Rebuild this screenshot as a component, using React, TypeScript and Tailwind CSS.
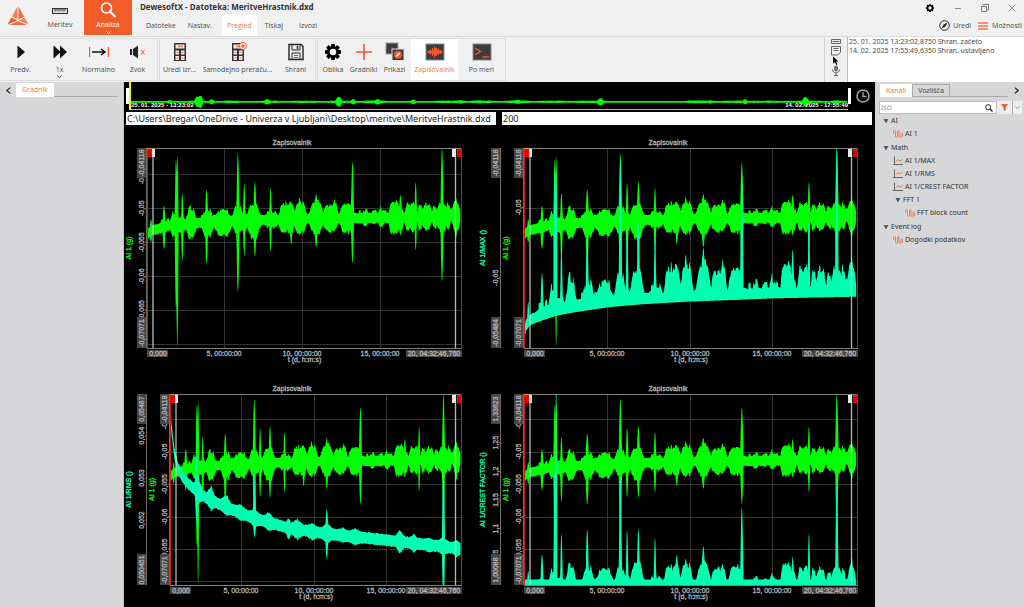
import type { ReactNode } from 'react';

type Point = [number, number];
type Band = { x: number; top: number; bottom: number };

const SPAN = 946;
const RANGE = 600;

// [position, half width, upper edge, lower edge]
const spikes = [
  [12, 4, 213, 283],
  [51, 5, 173, 303],
  [87, 4, 33, 480],
  [91, 4, 24, 601],
  [106, 4, 134, 341],
  [179, 5, 125, 348],
  [273, 5, 15, 434],
  [292, 4, 105, 325],
  [324, 5, 101, 326],
  [371, 4, 120, 311],
  [433, 5, 161, 290],
  [458, 6, 148, 262],
  [508, 6, 138, 298],
  [563, 5, 154, 250],
  [617, 5, 42, 346],
  [702, 4, 173, 238],
  [761, 5, 141, 263],
  [807, 4, 102, 308],
  [886, 5, 0, 401],
  [928, 5, 150, 270],
];

const bursts = [
  [84, 20, 188, 268],
  [102, 24, 205, 255],
  [133, 20, 172, 275],
  [182, 24, 180, 270],
  [229, 36, 182, 270],
  [273, 24, 173, 258],
  [292, 16, 190, 250],
  [320, 28, 166, 274],
  [374, 30, 186, 244],
  [411, 20, 158, 264],
  [430, 20, 158, 260],
  [460, 26, 156, 262],
  [509, 28, 152, 264],
  [545, 22, 164, 256],
  [563, 16, 160, 252],
  [594, 22, 162, 258],
  [606, 16, 162, 260],
  [656, 14, 182, 236],
  [680, 12, 184, 232],
  [705, 16, 180, 238],
  [738, 16, 154, 262],
  [750, 14, 154, 262],
  [764, 12, 176, 250],
  [785, 16, 162, 250],
  [797, 12, 156, 254],
  [820, 10, 164, 250],
  [840, 22, 162, 250],
  [864, 12, 170, 244],
  [886, 24, 162, 252],
  [905, 10, 160, 250],
  [928, 18, 158, 254],
];

const greenCenter: Point[] = [
  [0, 262], [8, 252], [20, 246], [70, 233], [120, 228], [220, 222],
  [320, 217], [420, 215], [520, 212], [720, 210], [946, 205],
];

const maxFloor: Point[] = [
  [0, 580], [6, 548], [17, 532], [50, 518], [92, 503], [143, 493], [237, 478],
  [332, 469], [464, 461], [616, 455], [710, 451], [946, 446],
];

const rmsCenter: Point[] = [
  [0, 60], [6, 120], [14, 185], [26, 232], [40, 260], [60, 282], [90, 307],
  [121, 328], [164, 348], [218, 370], [272, 390], [326, 405], [380, 420],
  [434, 428], [488, 436], [595, 449], [703, 459], [811, 471], [941, 486],
];

const rmsBursts = [
  [86, 5, 95, 80],
  [92, 16, 34, 24],
  [133, 14, 34, 20],
  [182, 18, 32, 14],
  [228, 20, 14, 10],
  [274, 5, 120, 42],
  [274, 20, 14, 12],
  [320, 18, 18, 12],
  [384, 8, 12, 18],
  [412, 20, 18, 20],
  [460, 18, 12, 14],
  [508, 5, 60, 62],
  [509, 20, 18, 16],
  [560, 20, 10, 6],
  [600, 20, 14, 12],
  [745, 16, 22, 24],
  [790, 14, 14, 14],
  [840, 16, 8, 10],
  [886, 5, 250, 160],
  [886, 20, 16, 12],
  [928, 16, 10, 12],
];

const interpolate = (points: Point[], x: number) => {
  const next = points.findIndex((p) => p[0] >= x);
  if (next === -1) return points[points.length - 1][1];
  if (next === 0) return points[0][1];
  const [x0, y0] = points[next - 1];
  const [x1, y1] = points[next];
  return y0 + ((y1 - y0) * (x - x0)) / (x1 - x0);
};

const noise = (n: number) => {
  const s = Math.sin(n * 12.9898) * 43758.5453;
  return s - Math.floor(s);
};

const spikeShape = (d: number, width: number) => Math.max(0, 1 - (d / width) ** 2);
const burstShape = (d: number, width: number) => Math.min(1, Math.max(0, 1 - d / width) * 1.5);

const signal: Band[] = [];
for (let x = 0; x <= 941; x++) {
  const center = interpolate(greenCenter, x);
  const cell = Math.floor(x / 4);
  let up = 14 + noise(cell) * 3 + (noise(Math.floor(x / 6) + 3) > 0.88 ? 8 : 0);
  let down = 13 + noise(cell + 500) * 3;
  bursts.forEach(([bx, width, top, bottom]) => {
    const shape = burstShape(Math.abs(x - bx), width);
    up = Math.max(up, (center - top) * shape * (0.72 + 0.28 * noise(cell + 90)));
    down = Math.max(down, (bottom - center) * shape * (0.72 + 0.28 * noise(cell + 290)));
  });
  spikes.forEach(([sx, width, top, bottom]) => {
    const k = spikeShape(x - sx, width);
    up = Math.max(up, (center - top) * k);
    down = Math.max(down, (bottom - center) * k);
  });
  signal.push({ x, top: center - up, bottom: center + down });
}

const maxSignal: Band[] = signal.map(({ x, top }) => {
  const floor = interpolate(maxFloor, x);
  return { x, top: Math.min(top * 2.16, floor - 18), bottom: floor };
});

const crestSignal: Band[] = signal.map(({ x, top, bottom }) => ({
  x,
  top: Math.min(583, 583 - (bottom - top - 38) * 0.86) - (bottom - top > 500 ? 300 : 0),
  bottom: RANGE,
}));

const rmsSignal: Band[] = signal.map(({ x }) => {
  const center = interpolate(rmsCenter, x);
  const cell = Math.floor(x / 3);
  let up = 16 + noise(cell + 40) * 4;
  let down = 16 + noise(cell + 70) * 4;
  rmsBursts.forEach(([bx, width, high, low]) => {
    const d = Math.abs(x - bx);
    const k = width < 9 ? spikeShape(d, width) : Math.max(0, 1 - d / width) * (0.6 + 0.4 * noise(cell));
    up = Math.max(up, 17 + high * k);
    down = Math.max(down, 17 + low * k);
  });
  return { x, top: center - up, bottom: center + down };
});

const bandPath = (band: Band[], left: number, top: number, width: number, height: number) => {
  const px = (x: number) => (left + (x / SPAN) * width).toFixed(1);
  const py = (y: number) =>
    (top + (Math.min(RANGE, Math.max(0, y)) / RANGE) * height).toFixed(1);
  const upper = band.map((b) => `${px(b.x)} ${py(b.top)}`);
  const lower = [...band].reverse().map((b) => `${px(b.x)} ${py(b.bottom)}`);
  return `M${upper.join('L')}L${lower.join('L')}Z`;
};

type Axis = {
  name: string;
  color: string;
  high: string;
  low: string;
  ticks: [string, number][];
};

type ChartProps = {
  width: number;
  height: number;
  left: number;
  right: number;
  plotHeight: number;
  titleX: number;
  axes: Axis[];
  rows: number[];
  columns: number[];
  overlay?: Band[];
};

const greenAxis: Axis = {
  name: 'AI 1 (g)',
  color: '#00ff00',
  high: '-0,04118',
  low: '-0,07071',
  ticks: [
    ['-0,045', 79], ['-0,05', 181], ['-0,055', 283],
    ['-0,06', 385], ['-0,065', 486],
  ],
};

const Vertical = ({ x, y, fill, children }: { x: number; y: number; fill: string; children: ReactNode }) => (
  <text
    transform={`translate(${x} ${y}) rotate(-90)`}
    textAnchor="middle"
    fill={fill}
    stroke={fill}
    strokeWidth={0.3}
  >
    {children}
  </text>
);

const Recorder = ({
  width, height, left, right, plotHeight, titleX, axes, rows, columns, overlay,
}: ChartProps) => {
  const top = 23;
  const bottom = top + plotHeight;
  const plotWidth = right - left;
  const rowY = (y: number) => top + (y / RANGE) * plotHeight;
  return (
    <svg
      viewBox={`0 0 ${width} ${height}`}
      className="block w-full font-['Liberation_Sans',Arial,sans-serif] text-[7px]"
    >
      <text x={titleX} y={top - 3} textAnchor="middle" fill="#b4b4b4" stroke="#b4b4b4" strokeWidth={0.3}>
        Zapisovalnik
      </text>

      {/* Grid */}
      {rows.map((y) => (
        <rect key={y} x={left} y={Math.round(rowY(y))} width={plotWidth} height={1} fill="#343434" />
      ))}
      {columns.map((x) => (
        <rect key={x} x={x} y={top} width={1} height={plotHeight} fill="#343434" />
      ))}
      <path d={`M${left} ${top + 0.5}H${right}M${left} ${bottom + 0.5}H${right}`} stroke="#808080" />

      {/* Signals */}
      <path d={bandPath(signal, left, top, plotWidth, plotHeight)} fill="#00ff00" />
      {overlay && <path d={bandPath(overlay, left, top, plotWidth, plotHeight)} fill="#00ffb0" />}

      {/* Value axes */}
      {axes.map((axis, i) => {
        const edge = left - i * 23;
        return (
          <g key={axis.name}>
            <Vertical x={edge - 16} y={top + plotHeight / 2} fill={axis.color}>{axis.name}</Vertical>
            {axis.ticks.map(([label, y]) => (
              <g key={label}>
                <Vertical x={edge - 3} y={rowY(y)} fill="#b4b4b4">{label}</Vertical>
                <path d={`M${edge - 2} ${rowY(y)}h2`} stroke="#808080" />
              </g>
            ))}
            <rect x={edge - 10} y={top} width={9} height={30} fill="#464646" />
            <rect x={edge - 10} y={bottom - 31} width={9} height={31} fill="#464646" />
            <Vertical x={edge - 3} y={top + 15} fill="#b4b4b4">{axis.high}</Vertical>
            <Vertical x={edge - 3} y={bottom - 15} fill="#b4b4b4">{axis.low}</Vertical>
            <path d={`M${edge - 0.5} ${top}V${bottom}`} stroke="#6e6e6e" />
          </g>
        );
      })}

      {/* Cursors */}
      <path d={`M${left + 0.5} ${top}V${bottom}M${right - 0.5} ${top}V${bottom}`} stroke="#d01818" />
      <path d={`M${left + 6} ${top}V${bottom}M${right - 6.5} ${top}V${bottom}`} stroke="#d8d8d8" strokeOpacity={0.85} strokeWidth={1.3} />
      <rect x={left} y={top + 1} width={5} height={8} fill="#ff0000" />
      <rect x={left} y={top} width={4} height={1} fill="#e0a000" />
      <rect x={right - 5} y={top + 1} width={5} height={8} fill="#ff0000" />
      <path d={`M${left + 1.5} ${top + 3}v5M${left + 2} ${top + 3.5}h2m-2 2h2m-2 2h2M${right - 3.5} ${top + 3}v5M${right - 3} ${top + 3.5}h2m-2 2h2m-2 2h2`} stroke="#a00000" strokeWidth={0.7} />
      <rect x={left + 5} y={top + 1} width={3} height={8} fill="#e8e8e8" />
      <rect x={right - 10} y={top + 1} width={4} height={8} fill="#e8e8e8" />

      {/* Time axis */}
      <g textAnchor="middle" fill="#b4b4b4">
        <rect x={left} y={bottom + 2} width={21} height={7} fill="#464646" />
        <rect x={right - 56} y={bottom + 2} width={56} height={7} fill="#464646" />
        <g stroke="#b4b4b4" strokeWidth={0.3}>
          {columns.map((x, i) => (
            <text key={x} x={x} y={bottom + 8}>{`${(i + 1) * 5}, 00:00:00`}</text>
          ))}
          <text x={left + plotWidth / 2} y={bottom + 14}>t (d, h:m:s)</text>
          <text x={left + 11} y={bottom + 8}>0,000</text>
          <text x={right - 28} y={bottom + 8}>20, 04:32:46,760</text>
        </g>
      </g>
    </svg>
  );
};

const Logo = () => (
  <svg className="h-[20px] w-[22px]" viewBox="0 0 22 20">
    <path d="M10.5 0.5L5 10.5L10.5 13.5Z" fill="#f58257" />
    <path d="M11.5 0.5L17 10.5L11.5 13.5Z" fill="#f26a3d" />
    <path d="M4.5 11.5L0.5 18.5L10 14.5Z" fill="#ee5a2c" />
    <path d="M17.5 11.5L21.5 18.5L12 14.5Z" fill="#f58257" />
    <path d="M11 15.2L2 19H20Z" fill="#f26a3d" />
  </svg>
);

const CalculatorIcon = ({ badge = false }: { badge?: boolean }) => (
  <svg className="h-5 w-5" viewBox="0 0 20 20">
    <rect x="4" y="1" width="12" height="18" fill="#333" />
    <rect x="5.5" y="2.5" width="9" height="4" fill="#eee" />
    <path d="M8 4.5h5" stroke="#f2724c" strokeWidth="1.5" />
    <g fill="#eee">
      <rect x="5.5" y="8.5" width="3.5" height="4" />
      <rect x="11" y="8.5" width="3.5" height="4" />
      <rect x="5.5" y="14" width="3.5" height="4" />
      <rect x="11" y="14" width="3.5" height="4" />
    </g>
    <path d="M6.5 10.5h2M11.5 10.5h2M6.5 16h2M11.5 16h2" stroke="#f2724c" />
    {badge && (
      <>
        <circle cx="15" cy="4" r="3.5" fill="#fff" stroke="#f2572c" strokeWidth="1" />
        <circle cx="15" cy="4" r="1.7" fill="#f2572c" />
      </>
    )}
  </svg>
);

const GearIcon = ({ className }: { className: string }) => (
  <svg className={className} viewBox="-10 -10 20 20">
    {[0, 45, 90, 135].map((angle) => (
      <rect key={angle} x="-1.9" y="-8" width="3.8" height="16" rx="0.8" transform={`rotate(${angle})`} />
    ))}
    <circle r="6" />
    <circle r="3.3" fill="#f0f0f0" />
  </svg>
);

const NormalIcon = () => (
  <svg className="h-5 w-5" viewBox="0 0 20 20" fill="none">
    <path d="M0.5 5v10M19.5 5v10" stroke="#f2572c" strokeWidth="1.3" />
    <path d="M3 10h13M12 7l4 3l-4 3" stroke="#111" strokeWidth="1.5" />
  </svg>
);

const PlayIcon = () => (
  <svg className="h-5 w-5" viewBox="0 0 20 20">
    <path d="M6.5 3.5V16.500L14 10Z" fill="#111" />
  </svg>
);

const ForwardIcon = () => (
  <svg className="h-5 w-5" viewBox="0 0 20 20">
    <path d="M3.500 3.500V16.500L10 10.800V16.500L17 10L10 3.500V9.200Z" fill="#111" />
  </svg>
);

const MuteIcon = () => (
  <svg className="h-5 w-5" viewBox="0 0 20 20" fill="none">
    <path d="M2 7h2v6H2zM5 7l5-3.5v13L5 13z" fill="#222" />
    <path d="M13 8l3.5 4.5M16.5 8L13 12.5" stroke="#f2572c" />
  </svg>
);

const SaveIcon = () => (
  <svg className="h-5 w-5" viewBox="0 0 20 20" fill="none" stroke="#222">
    <path d="M3 2.500h12l2 2v13H3z" strokeWidth="1.400" />
    <path d="M6 3v5h8V3M6 17v-6h8v6" />
    <path d="M11.500 4v3" strokeWidth="1.500" />
    <path d="M8 13.500h4M8 15.500h4" strokeWidth="0.700" />
  </svg>
);

const PlusIcon = () => (
  <svg className="h-5 w-5" viewBox="0 0 20 20">
    <path d="M10 2v16M2 10h16" stroke="#f2572c" strokeWidth="1.6" />
  </svg>
);

const ScreensIcon = () => (
  <svg className="h-5 w-5" viewBox="0 0 20 20">
    <rect x="1" y="1" width="12" height="11" fill="#3c3c3c" stroke="#999" />
    <rect x="7" y="7" width="12" height="11.5" fill="#3c3c3c" stroke="#ddd" />
    <circle cx="13" cy="12.8" r="4" fill="#f2572c" />
    <path d="M11.3 14.6l3.4-3.6" stroke="#fff" strokeWidth="1.4" />
  </svg>
);

const WaveIcon = () => (
  <svg className="h-5 w-5" viewBox="0 0 20 20">
    <rect x="1" y="2" width="18" height="16" fill="#3c3c3c" stroke="#888" />
    <path
      d="M2 10h16M3.500 9v2M4.500 8.500v3M5.500 7.500v5M6.500 8.500v3M7.500 6v8M8.500 7.500v5M9.500 4.500v11M10.500 6v8M11.500 5.500v8M12.500 7.500v5M13.500 6.500v6M14.500 8.500v3M15.500 8v4M16.500 9v2"
      stroke="#f2572c"
    />
  </svg>
);

const ConsoleIcon = () => (
  <svg className="h-5 w-5" viewBox="0 0 20 20" fill="none">
    <rect x="1" y="2" width="18" height="16" fill="#3c3c3c" stroke="#888" />
    <path d="M3 6l5.500 3.500l-5.500 3.500M10.500 15h6.500" stroke="#f2572c" strokeWidth="1.300" />
  </svg>
);

const Chevron = ({ className }: { className: string }) => (
  <svg className={className} viewBox="0 0 6 6" fill="none">
    <path d="M0.500 1.500L3 4.500L5.500 1.500" stroke="currentColor" />
  </svg>
);

type ToolProps = {
  label: string;
  icon: ReactNode;
  width: string;
  active?: boolean;
  arrow?: boolean;
};

const Tool = ({ label, icon, width, active, arrow }: ToolProps) => (
  <button
    className={`relative flex flex-col items-center gap-[3px] whitespace-nowrap pt-[3px] ${width} ${active ? 'bg-white text-[#f2724c]' : ''}`}
  >
    {icon}
    <span className="leading-[10px]">{label}</span>
    {arrow && <Chevron className="absolute bottom-px h-[5px] w-[5px] text-[#333]" />}
  </button>
);

const channels = [
  [
    { label: 'AI', kind: 'group', indent: 'pl-2' },
    { label: 'AI 1', kind: 'wave', indent: 'pl-[18px]' },
  ],
  [
    { label: 'Math', kind: 'group', indent: 'pl-2' },
    { label: 'AI 1/MAX', kind: 'math', indent: 'pl-[18px]' },
    { label: 'AI 1/RMS', kind: 'math', indent: 'pl-[18px]' },
    { label: 'AI 1/CREST FACTOR', kind: 'math', indent: 'pl-[18px]' },
    { label: 'FFT 1', kind: 'group', indent: 'pl-5' },
    { label: 'FFT block count', kind: 'wave', indent: 'pl-[30px]' },
  ],
  [
    { label: 'Event log', kind: 'group', indent: 'pl-2' },
    { label: 'Dogodki podatkov', kind: 'wave', indent: 'pl-[18px]' },
  ],
];

const ChannelIcon = ({ kind }: { kind: string }) => {
  if (kind === 'group') {
    return (
      <svg className="h-[6px] w-[6px]" viewBox="0 0 6 6">
        <path d="M0.500 1H5.500L3 5.500Z" fill="#555" />
      </svg>
    );
  }
  if (kind === 'math') {
    return (
      <svg className="h-[10px] w-[10px]" viewBox="0 0 10 10" fill="none">
        <path d="M1.500 0.500V9M0 8.500H10" stroke="#666" />
        <path d="M3 5.500L5 3.500L7 5L9.500 3.500" stroke="#f2724c" />
      </svg>
    );
  }
  return (
    <svg className="h-[10px] w-[10px]" viewBox="0 0 10 10" fill="none">
      <path
        d="M0.500 5V3Q0.500 1.500 1.500 1.500T2.500 3V7Q2.500 8.500 3.500 8.500T4.500 7V3Q4.500 1.500 5.200 1.500T6 3V7Q6 8.500 7 8.500T8 7V5.500Q8 4 8.700 4T9.500 5.500V8"
        stroke="#f2724c"
        strokeWidth="0.900"
      />
    </svg>
  );
};

const tabs = ['Datoteke', 'Nastav.', 'Pregled', 'Tiskaj', 'Izvozi'];

const overview: Band[] = signal.map(({ x, top, bottom }) => {
  const swing = Math.min(110, Math.max(0, bottom - top - 60) / 4);
  return { x, top: 420 - swing, bottom: 460 + swing };
});

export default function App() {
  return (
    <div className="flex min-h-screen flex-col bg-[#f0f0f0] font-['Open_Sans','Noto_Sans',sans-serif] text-[7px] leading-[10px] text-[#4a4a4a]">
      {/* Title bar and menu */}
      <header className="flex h-[37px] border-b border-[#dcdcdc]">
        <div className="flex w-9 justify-center pt-[6px]">
          <Logo />
        </div>
        <button className="flex w-12 flex-col items-center pt-2">
          <svg className="h-[6px] w-4" viewBox="0 0 16 6" fill="none">
            <rect x="0.500" y="0.500" width="15" height="5" fill="#ddd" stroke="#333" />
            <path d="M3 1v2.500M5 1v2M7 1v2.500M9 1v2M11 1v2.500M13 1v2" stroke="#333" />
          </svg>
          <span className="mt-[6px]">Meritev</span>
        </button>
        <button className="flex h-[35px] w-12 flex-col items-center bg-[#f25c2b] pt-[2px] text-white">
          <svg className="h-4 w-4" viewBox="0 0 16 16" fill="none" stroke="white">
            <circle cx="6.500" cy="6" r="5" strokeWidth="1.600" />
            <path d="M10.200 9.700L15.500 15" strokeWidth="2" />
          </svg>
          <span className="mt-[2px]">Analiza</span>
          <Chevron className="h-[5px] w-[5px]" />
        </button>
        <div className="flex flex-1 flex-col pl-2">
          <h1 className="h-[15px] pt-[2px] font-['Noto_Sans',sans-serif] text-[8px] font-bold text-[#333]">
            DewesoftX - Datoteka: MeritveHrastnik.dxd
          </h1>
          <nav className="flex h-[21px] items-stretch">
            {tabs.map((tab) => (
              <a
                key={tab}
                href="#"
                className={`flex items-center ${tab === 'Pregled' ? 'mx-1 bg-white px-[5px] text-[#f2724c]' : tab === 'Izvozi' ? 'px-3' : tab === 'Tiskaj' ? 'px-1' : 'px-[6px]'}`}
              >
                {tab}
              </a>
            ))}
          </nav>
        </div>
        <div className="flex flex-col items-end">
          <div className="flex h-[15px] items-center gap-[19px] pr-2">
            <button aria-label="Nastavitve">
              <GearIcon className="h-[10px] w-[10px]" />
            </button>
            <button aria-label="Pomanjšaj" className="text-[#888]">
              <svg className="h-2 w-2" viewBox="0 0 8 8"><path d="M1 4.500h6" stroke="currentColor" /></svg>
            </button>
            <button aria-label="Povečaj" className="text-[#777]">
              <svg className="h-2 w-2" viewBox="0 0 8 8" fill="none" stroke="currentColor">
                <path d="M0.500 2.500h5v5h-5zM2 1.500V0.500h5.500v5.500H6" />
              </svg>
            </button>
            <button aria-label="Zapri" className="text-[#888]">
              <svg className="h-2 w-2" viewBox="0 0 8 8"><path d="M0.500 0.500l7 7M7.500 0.500l-7 7" stroke="currentColor" /></svg>
            </button>
          </div>
          <div className="flex h-[21px] items-center gap-[7px] pr-[2px]">
            <button className="flex items-center gap-[3px]">
              <svg className="h-[11px] w-[11px]" viewBox="0 0 11 11">
                <circle cx="5.500" cy="5.500" r="4.800" fill="none" stroke="#222" />
                <path d="M2.500 8.500L4.500 4.500L8.500 2.500L6.500 6.500Z" fill="#222" />
              </svg>
              Uredi
            </button>
            <button className="flex items-center gap-1">
              <svg className="h-2 w-[10px]" viewBox="0 0 10 8">
                <path d="M0 1h10M0 4h10M0 7h10" stroke="#f2724c" strokeWidth="1.500" />
              </svg>
              Možnosti
            </button>
          </div>
        </div>
      </header>

      {/* Toolbar */}
      <div className="flex h-[45px]">
        <div className="flex flex-1 gap-px py-px pl-px">
          <div className="flex border border-l-0 border-[#dedede]">
            <Tool label="Predv." icon={<PlayIcon />} width="w-[39px]" />
            <Tool label="1x" icon={<ForwardIcon />} width="w-[39px]" arrow />
            <Tool label="Normalno" icon={<NormalIcon />} width="w-[39px]" />
            <Tool label="Zvok" icon={<MuteIcon />} width="w-[39px]" />
          </div>
          <div className="flex border border-[#dedede]">
            <Tool label="Uredi izr..." icon={<CalculatorIcon />} width="w-[39px]" />
            <Tool label="Samodejno preraču..." icon={<CalculatorIcon badge />} width="w-[77px]" />
            <Tool label="Shrani" icon={<SaveIcon />} width="w-[39px]" />
          </div>
          <div className="flex border border-r-0 border-[#dedede]">
            <Tool label="Oblika" icon={<GearIcon className="h-5 w-5" />} width="w-[30px]" />
            <Tool label="Gradniki" icon={<PlusIcon />} width="w-[31px]" />
            <Tool label="Prikazi" icon={<ScreensIcon />} width="w-[31px]" />
          </div>
          <div className="flex border border-l-0 border-[#dedede]">
            <Tool label="Zapisovalnik" icon={<WaveIcon />} width="w-[47px]" active />
            <Tool label="Po meri" icon={<ConsoleIcon />} width="w-[47px]" />
          </div>
        </div>
        <div className="flex w-[23px] flex-col items-center border-l border-[#d0d0d0] pt-[2px]">
          <svg className="h-[40px] w-[12px]" viewBox="0 0 12 40" fill="none" stroke="#666">
            <path d="M1.500 0.500h9v4h-9zM2.500 2.500h7" />
            <path d="M1.500 7.500h9v6l-3 2.500h-6zM3.500 9.500h5M3.500 11.500h5" />
            <path d="M3 17.500v7l1.800-1.500 1.500 3 1.200-.6-1.400-3H8.500z" fill="#000" stroke="none" />
            <rect x="4.500" y="27" width="3" height="5" rx="1.500" fill="#777" />
            <path d="M2.500 30.500c0 4.500 7 4.500 7 0M6 34v2.500M4 36.500h4" />
          </svg>
        </div>
        <div className="w-[177px] overflow-hidden border-l border-[#bbb] bg-white pl-px font-['Noto_Sans',sans-serif] leading-[9px] whitespace-nowrap">
          <p>25. 01. 2025 13:23:02,8750 Shran. začeto</p>
          <p>14. 02. 2025 17:55:49,6350 Shran. ustavljeno</p>
        </div>
      </div>

      <div className="flex flex-1">
        {/* Widget panel */}
        <aside className="w-[124px] border-r border-[#c4c4c8] bg-[#d7d6d9] pt-px">
          <div className="flex items-end">
            <button aria-label="Skrij" className="flex h-[14px] w-4 items-center justify-center text-[#222]">
              <Chevron className="h-[7px] w-[7px] rotate-90" />
            </button>
            <button className="h-[14px] bg-white px-[6px] text-[#f2724c]">Gradnik</button>
            <div className="mr-[6px] flex-1 border-b border-[#aaa]" />
          </div>
        </aside>

        <main className="min-w-0 flex-1 bg-black">
          {/* Overview strip */}
          <div className="flex h-7 items-center pl-[2px]">
            <div className="h-4 w-[3px] bg-white" />
            <div className="relative h-full flex-1 border-b border-l-2 border-b-[#bbb] border-l-[#f5f500]">
              <svg className="absolute inset-0 h-full w-full" viewBox="0 0 946 600" preserveAspectRatio="none">
                <path d={bandPath(overview, 0, 0, 950, 600)} fill="#00ff00" />
              </svg>
              <div className="absolute inset-x-0 bottom-0 flex justify-between font-['Liberation_Sans',Arial,sans-serif] text-[6px] leading-[8px] font-bold text-white">
                <span>25. 01. 2025 - 13:23:02</span>
                <span>14. 02. 2025 - 17:55:49</span>
              </div>
            </div>
            <div className="h-4 w-[3px] bg-white" />
            <svg className="mx-[5px] h-[14px] w-[14px]" viewBox="0 0 14 14" fill="none" stroke="#a8a8a8">
              <circle cx="7" cy="7" r="6" strokeWidth="1.500" />
              <path d="M7 3v4.500h3.500" strokeWidth="1.300" />
            </svg>
          </div>
          <div className="flex gap-[6px] pt-[2px] pr-[3px] pl-[2px] font-['Noto_Sans',sans-serif] text-[9px] text-[#222]">
            <input
              aria-label="Datoteka"
              className="h-[13px] min-w-0 flex-1 bg-white pl-px"
              defaultValue="C:\Users\Bregar\OneDrive - Univerza v Ljubljani\Desktop\meritve\MeritveHrastnik.dxd"
            />
            <input aria-label="Vrednost" className="h-[13px] min-w-0 flex-1 bg-white pl-px" defaultValue="200" />
          </div>

          {/* Recorders */}
          <div className="grid grid-cols-[355fr_396fr]">
            <Recorder
              width={355} height={246} left={23} right={338} plotHeight={200} titleX={168}
              axes={[greenAxis]}
              rows={[79, 181, 283, 385, 486, 588]} columns={[100, 178, 256]}
            />
            <Recorder
              width={396} height={246} left={45} right={379} plotHeight={200} titleX={189}
              axes={[
                { ...greenAxis, ticks: [['-0,05', 178]] },
                { name: 'AI 1/MAX ()', color: '#00ffb0', high: '-0,04118', low: '-0,05484', ticks: [['-0,05', 389]] },
              ]}
              rows={[181]} columns={[128, 211, 293]}
              overlay={maxSignal}
            />
            <Recorder
              width={355} height={236} left={46} right={338} plotHeight={191} titleX={168}
              axes={[
                greenAxis,
                {
                  name: 'AI 1/RMS ()', color: '#00ffb0', high: '0,05487', low: '0,050451',
                  ticks: [['0,054', 131], ['0,053', 264], ['0,052', 396]],
                },
              ]}
              rows={[79, 181, 283, 385, 486, 588]} columns={[117, 190, 262]}
              overlay={rmsSignal}
            />
            <Recorder
              width={396} height={236} left={45} right={379} plotHeight={191} titleX={189}
              axes={[
                greenAxis,
                {
                  name: 'AI 1/CREST FACTOR ()', color: '#00ffb0', high: '1,33623', low: '1,00088',
                  ticks: [['1,3', 66], ['1,25', 153], ['1,2', 243], ['1,15', 333], ['1,1', 423], ['1,05', 511]],
                },
              ]}
              rows={[79, 181, 283, 385, 486, 588]} columns={[128, 211, 293]}
              overlay={crestSignal}
            />
          </div>
        </main>

        {/* Channel list */}
        <aside className="w-[149px] bg-[#d7d6d9] pt-[2px] font-['Noto_Sans',sans-serif]">
          <div className="flex items-end pl-[5px]">
            <button className="h-[13px] bg-white px-[6px] text-[#f2724c]">Kanali</button>
            <button className="h-[13px] border border-[#aaa] px-[5px]">Vozlišča</button>
            <div className="flex-1 border-b border-[#aaa]" />
            <button aria-label="Razširi" className="flex h-[13px] w-4 items-center justify-center text-[#222]">
              <Chevron className="h-[7px] w-[7px] -rotate-90" />
            </button>
          </div>
          <div className="mt-1 flex items-center pr-[2px] pl-1">
            <label className="flex h-[13px] min-w-0 flex-1 items-center border border-[#bbb] bg-white pr-[3px]">
              <input aria-label="Išči" placeholder="Išči" className="min-w-0 flex-1 pl-px placeholder:text-[#999]" />
              <svg className="h-2 w-2" viewBox="0 0 8 8" fill="none" stroke="#222">
                <circle cx="3.200" cy="3.200" r="2.500" />
                <path d="M5 5l2.500 2.500" strokeWidth="1.400" />
              </svg>
            </label>
            <button aria-label="Filter" className="flex h-[13px] w-[15px] items-center justify-center bg-[#eee]">
              <svg className="h-[7px] w-[7px]" viewBox="0 0 7 7">
                <path d="M0 0H7L4.500 3.500V7L2.500 6V3.500Z" fill="#f25c2b" />
              </svg>
            </button>
            <button aria-label="Možnosti filtra" className="flex h-[13px] w-[10px] items-center justify-center border-l border-[#aaa] bg-[#eee] text-[#888]">
              <Chevron className="h-[5px] w-[5px]" />
            </button>
          </div>
          <div className="flex flex-col gap-px">
            {channels.map((group) => (
              <ul key={group[0].label}>
                {group.map((channel) => (
                  <li key={channel.label} className={`flex h-[13px] items-center gap-[2px] text-[#333] ${channel.indent}`}>
                    <ChannelIcon kind={channel.kind} />
                    {channel.label}
                  </li>
                ))}
              </ul>
            ))}
          </div>
        </aside>
      </div>
    </div>
  );
}
